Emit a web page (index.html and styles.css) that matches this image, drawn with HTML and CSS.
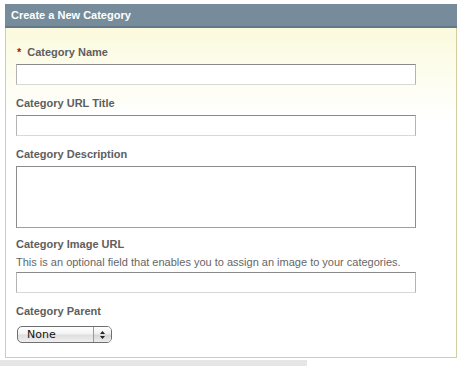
FILE: index.html
```html
<!DOCTYPE html>
<html>
<head>
<meta charset="utf-8">
<link rel="stylesheet" href="styles.css">
</head>
<body>
<div class="page">
  <div class="panel">
    <div class="panel-head">Create a New Category</div>
    <div class="panel-body">
      <div class="field f1">
        <label class="lbl"><span class="req">*</span>Category Name</label>
        <input class="txt" type="text">
      </div>
      <div class="field">
        <label class="lbl">Category URL Title</label>
        <input class="txt" type="text">
      </div>
      <div class="field">
        <label class="lbl">Category Description</label>
        <textarea class="area"></textarea>
      </div>
      <div class="field f4">
        <label class="lbl">Category Image URL</label>
        <div class="help">This is an optional field that enables you to assign an image to your categories.</div>
        <input class="txt" type="text">
      </div>
      <div class="field f5">
        <label class="lbl">Category Parent</label>
        <div class="select">
          <span class="sel-val">None</span>
          <span class="sel-btn">
            <svg width="7" height="10" viewBox="0 0 7 10"><path d="M3.5 1 L6 4 L1 4 Z M3.5 9 L6 6 L1 6 Z" fill="#222"/></svg>
          </span>
        </div>
      </div>
    </div>
  </div>
  <div class="strip"></div>
</div>
</body>
</html>
```
FILE: styles.css
```css
html, body {
  margin: 0;
  padding: 0;
  background: #fff;
}
.page {
  width: 463px;
  height: 366px;
  padding-top: 4px;
  box-sizing: border-box;
  font-family: "Liberation Sans", Arial, sans-serif;
  position: relative;
  overflow: hidden;
}
.panel {
  margin-left: 5px;
  width: 452px;
}
.panel-head {
  height: 22px;
  background: #768c9b;
  border-bottom: 2px solid #63788a;
  color: #fff;
  font-size: 11px;
  font-weight: bold;
  line-height: 23px;
  padding-left: 6px;
}
.panel-body {
  border: 1px solid #d2cea4;
  border-top: none;
  background: linear-gradient(to bottom, #fbfadd 0px, #fdfdf0 50px, #ffffff 90px, #ffffff 100%);
  padding: 17px 10px 14px 10px;
  height: 299px;
  box-sizing: border-box;
  height: 330px;
}
.field {
  display: flex;
  flex-direction: column;
  margin-bottom: 11px;
}
.lbl {
  font-size: 11px;
  font-weight: bold;
  color: #5e5e5e;
  line-height: 14px;
  margin-bottom: 5px;
}
.req {
  color: #b01818;
  margin-right: 6px;
  margin-left: 1px;
}
.txt, .area {
  display: block;
  width: 400px;
  height: 21px;
  box-sizing: border-box;
  margin: 0;
  padding: 0;
  background: #fff;
  border: 1px solid #c4c4c4;
  border-top: 1px solid #8a8a8a;
  border-left-color: #b4b4b4;
  border-right-color: #b4b4b4;
  border-bottom-color: #d8d8d8;
  border-radius: 0;
  outline: none;
}
.area {
  height: 62px;
  resize: none;
  border: 1px solid #8c8c8c;
  border-bottom-color: #a0a0a0;
}
.f4 {
  margin-top: -2px;
}
.f4 .lbl {
  margin-bottom: 4px;
}
.help {
  font-size: 11px;
  color: #666;
  line-height: 14px;
  margin-bottom: 3px;
}
.f5 {
  margin-top: 1px;
  margin-bottom: 0;
}
.f5 .lbl {
  margin-bottom: 8px;
}
.select {
  display: flex;
  align-items: stretch;
  width: 95px;
  height: 17px;
  box-sizing: border-box;
  margin-left: 1px;
  border: 1px solid #6f6f6f;
  border-radius: 5px;
  background: linear-gradient(to bottom, #ffffff 0%, #f3f3f3 45%, #dedede 55%, #f0f0f0 100%);
  overflow: hidden;
}
.sel-val {
  flex: 1;
  font-family: "Lucida Grande", "DejaVu Sans", sans-serif;
  font-size: 11px;
  color: #111;
  line-height: 15px;
  padding-left: 9px;
}
.sel-btn {
  width: 17px;
  display: flex;
  align-items: center;
  justify-content: center;
  border-left: 1px solid #9a9a9a;
  background: linear-gradient(to bottom, #ffffff 0%, #eeeeee 45%, #d6d6d6 55%, #ececec 100%);
}
.strip {
  position: absolute;
  left: 0;
  top: 360px;
  width: 307px;
  height: 6px;
  background: #e6e6e6;
}
```
